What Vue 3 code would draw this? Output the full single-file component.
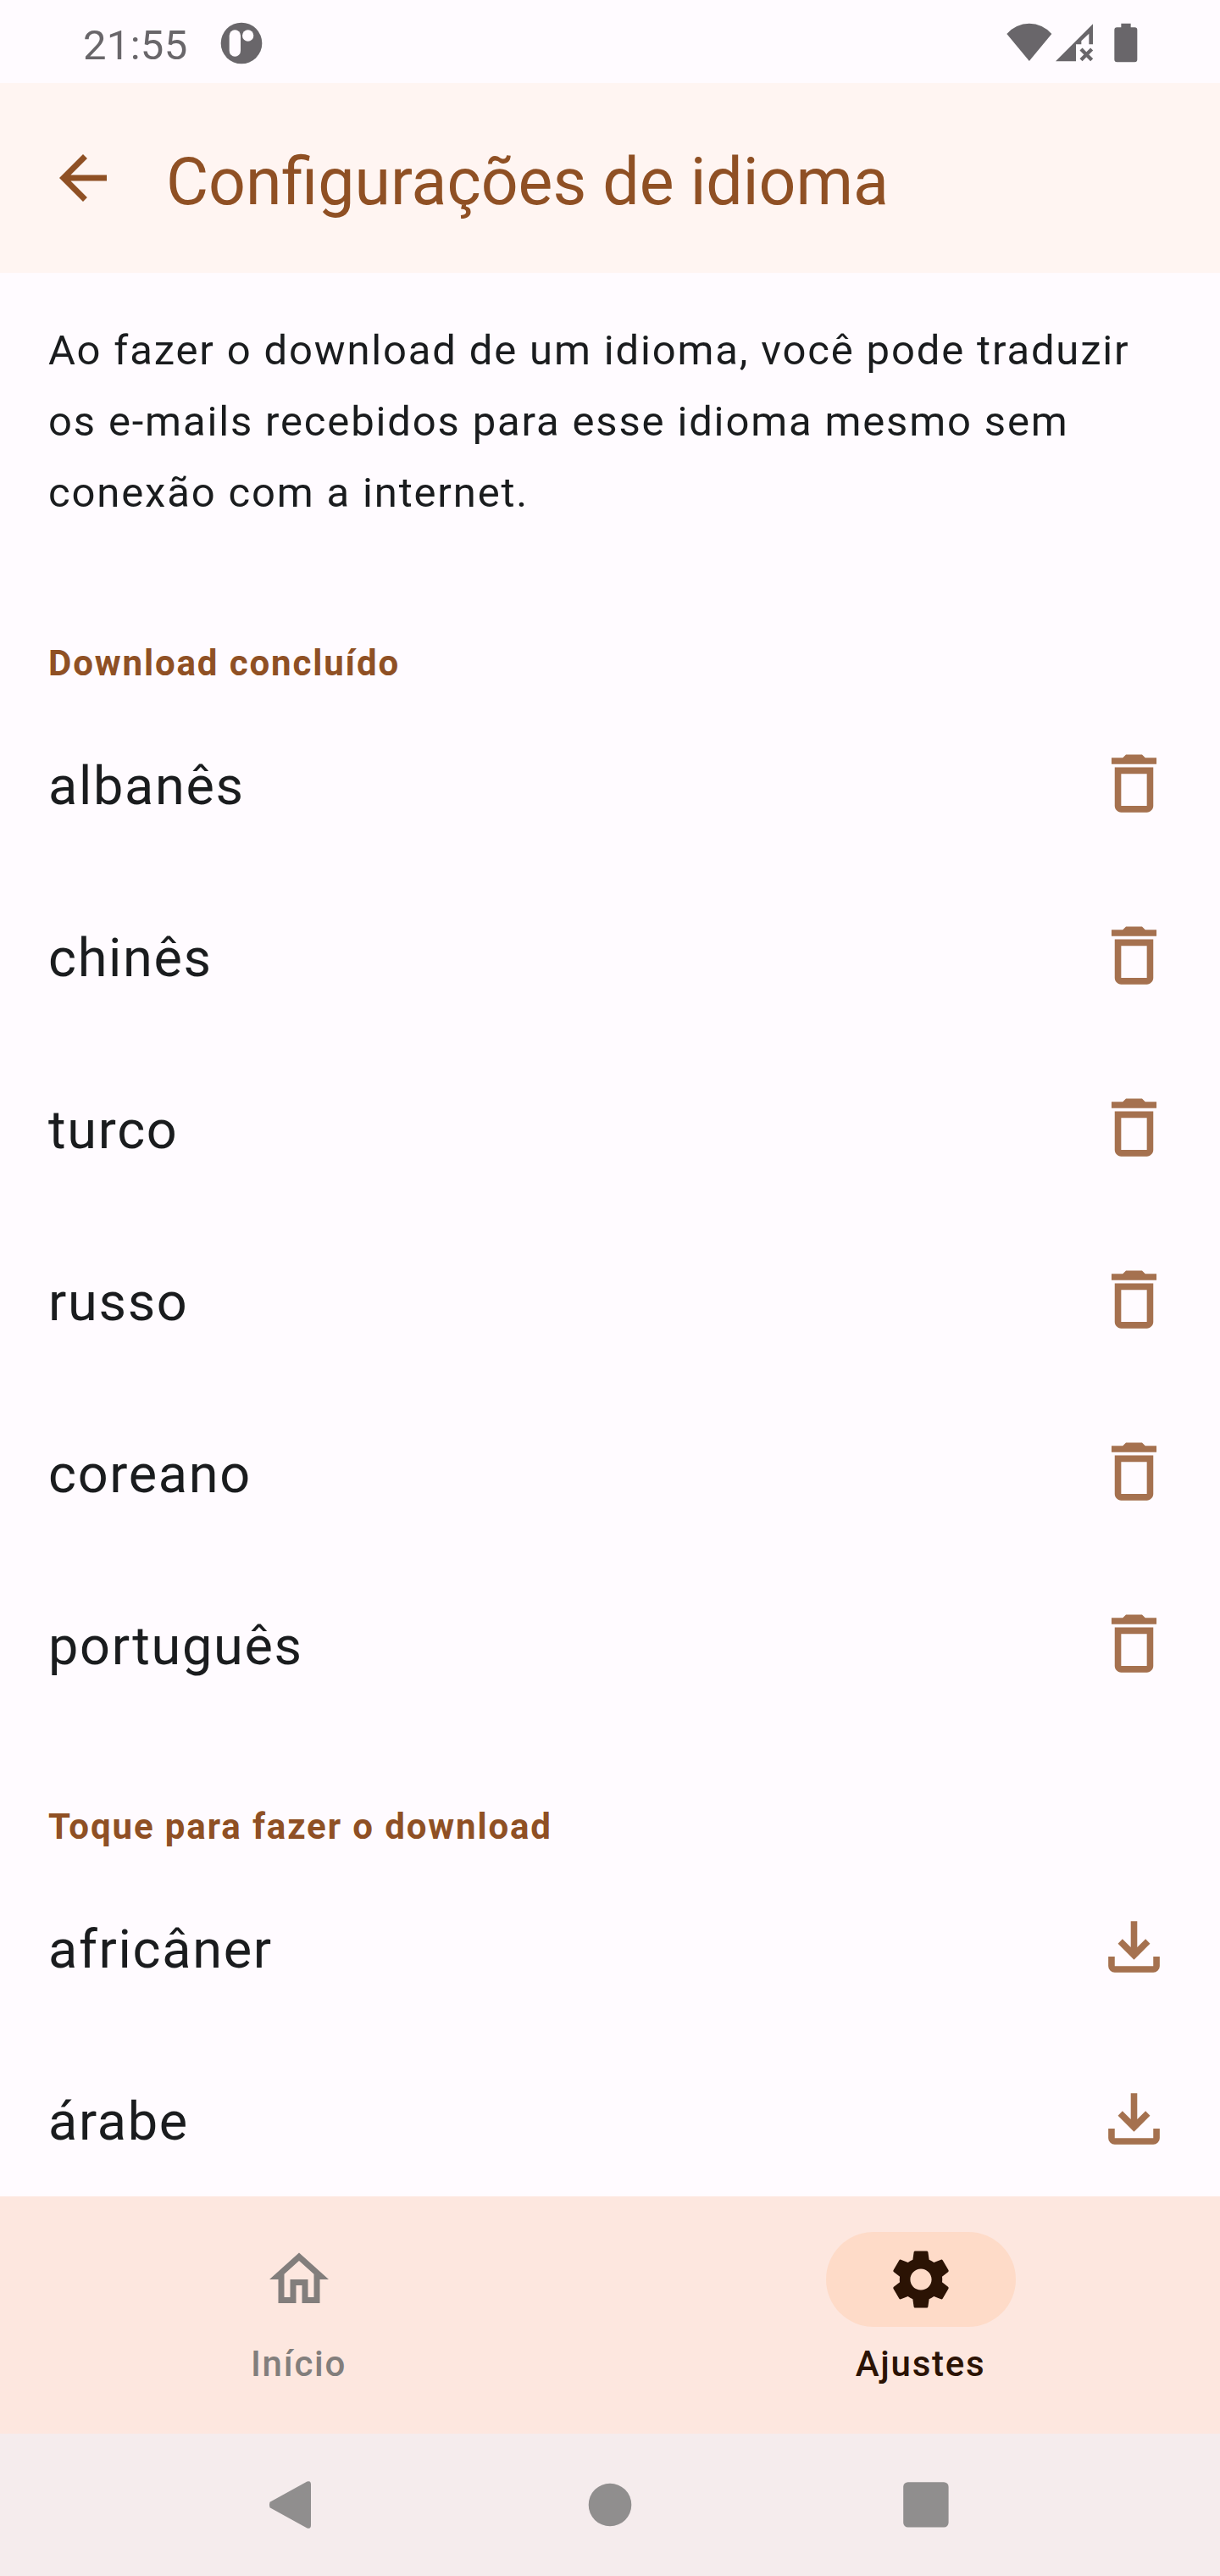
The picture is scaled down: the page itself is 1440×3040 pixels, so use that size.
<script setup>
const intro = [
  'Ao fazer o download de um idioma, você pode traduzir',
  'os e-mails recebidos para esse idioma mesmo sem',
  'conexão com a internet.',
]

const trash =
  'M6 19c0 1.1.9 2 2 2h8c1.1 0 2-.9 2-2V7H6v12zM8 9h8v10H8V9zM15.5 4l-1-1h-5l-1 1H5v2h14V4z'
const download =
  'M12 16L7 11l1.4-1.45L11 12.15V4h2v8.15l2.6-2.6L17 11zM6 20q-.825 0-1.4125-.5875T4 18v-3h2v3h12v-3h2v3q0 .825-.5875 1.4125T18 20z'

const sections = [
  {
    title: 'Download concluído',
    icon: trash,
    action: 'Excluir',
    languages: ['albanês', 'chinês', 'turco', 'russo', 'coreano', 'português'],
  },
  {
    title: 'Toque para fazer o download',
    icon: download,
    action: 'Baixar',
    languages: ['africâner', 'árabe'],
  },
]

const tabs = [
  {
    label: 'Início',
    active: false,
    icon: 'M12 5.69l5 4.5V18h-2v-6H9v6H7v-7.81l5-4.5M12 3L2 12h3v8h6v-6h2v6h6v-8h3L12 3z',
  },
  {
    label: 'Ajustes',
    active: true,
    icon: 'M19.14 12.94c.04-.3.06-.61.06-.94 0-.32-.02-.64-.07-.94l2.03-1.58c.18-.14.23-.41.12-.61l-1.92-3.32c-.12-.22-.37-.29-.59-.22l-2.39.96c-.5-.38-1.03-.7-1.62-.94l-.36-2.54c-.04-.24-.24-.41-.48-.41h-3.84c-.24 0-.43.17-.47.41l-.36 2.54c-.59.24-1.13.57-1.62.94l-2.39-.96c-.22-.08-.47 0-.59.22L2.74 8.87c-.12.21-.08.47.12.61l2.03 1.58c-.05.3-.09.63-.09.94s.02.64.07.94l-2.03 1.58c-.18.14-.23.41-.12.61l1.92 3.32c.12.22.37.29.59.22l2.39-.96c.5.38 1.03.7 1.62.94l.36 2.54c.05.24.24.41.48.41h3.84c.24 0 .44-.17.47-.41l.36-2.54c.59-.24 1.13-.56 1.62-.94l2.39.96c.22.08.47 0 .59-.22l1.92-3.32c.12-.22.07-.47-.12-.61l-2.01-1.58zM12 15.6c-1.98 0-3.6-1.62-3.6-3.6s1.62-3.6 3.6-3.6 3.6 1.62 3.6 3.6-1.62 3.6-3.6 3.6z',
  },
]
</script>

<template>
  <div class="screen">
    <div class="status">
      <div class="status-left">
        <span class="clock">21:55</span>
        <svg class="badge" viewBox="0 0 150 150">
          <circle cx="75" cy="75" r="73" />
          <rect class="hole" x="32" y="28" width="40" height="94" rx="20" />
          <circle class="hole" cx="98" cy="48" r="20" />
        </svg>
      </div>
      <svg class="status-right" viewBox="0 0 480 150">
        <path d="M4 45A105 105 0 0 1 163 45L83.500 141Z" />
        <path d="M177 142L309 10V82H295V44L268 70V82H249V142Z" />
        <path class="cross" d="M267 99L305 137M305 99L267 137" />
        <path d="M409 8h34v14h14q9 0 9 9v105q0 9-9 9h-63q-9 0-9-9V31q0-9 9-9h15z" />
      </svg>
    </div>

    <header class="app-bar">
      <svg class="back" viewBox="0 0 24 24">
        <path d="M20 11H7.830l5.590-5.590L12 4l-8 8 8 8 1.410-1.410L7.830 13H20v-2z" />
      </svg>
      <h1>Configurações de idioma</h1>
    </header>

    <main>
      <p class="intro">
        <span v-for="line in intro" :key="line">{{ line }}</span>
      </p>
      <section v-for="s in sections" :key="s.title">
        <h2>{{ s.title }}</h2>
        <ul>
          <li v-for="name in s.languages" :key="name">
            <span class="name">{{ name }}</span>
            <svg class="action" viewBox="0 0 24 24" :aria-label="s.action">
              <path fill-rule="evenodd" :d="s.icon" />
            </svg>
          </li>
        </ul>
      </section>
    </main>

    <nav class="tabs">
      <div v-for="t in tabs" :key="t.label" class="tab" :class="{ active: t.active }">
        <span class="pill">
          <svg viewBox="0 0 24 24"><path :d="t.icon" /></svg>
        </span>
        <span class="label">{{ t.label }}</span>
      </div>
    </nav>

    <div class="system">
      <svg viewBox="0 0 60 60"><path d="M6.500 26.800L50.500 2.600Q55 1 55 6V54Q55 59 50.500 57.400L6.500 33.200Q5.400 30 6.500 26.800Z" /></svg>
      <svg viewBox="0 0 60 60"><circle cx="30" cy="30" r="25.300" /></svg>
      <svg viewBox="0 0 60 60"><rect x="3.200" y="3.200" width="53.400" height="53.400" rx="5.500" /></svg>
    </div>
  </div>
</template>

<style>
body {
  margin: 0;
}
</style>

<style scoped>
.screen {
  width: 1440px;
  height: 3040px;
  display: flex;
  flex-direction: column;
  overflow: hidden;
  background: #fffbff;
  color: #1a1c1e;
  font-family: Roboto, sans-serif;
}
svg {
  display: block;
  flex: none;
  fill: currentColor;
}
.status {
  flex: none;
  height: 98px;
  box-sizing: border-box;
  display: flex;
  justify-content: space-between;
  padding: 25px 93px 0 98px;
  color: #69666a;
}
.status-left {
  display: flex;
  gap: 38px;
}
.clock {
  width: 124px;
  padding-top: 1px;
  font-size: 49px;
  line-height: 56px;
  letter-spacing: 0.3px;
  white-space: nowrap;
}
.badge {
  width: 50px;
  height: 50px;
  margin-top: 1px;
}
.hole {
  fill: #fffbff;
}
.status-right {
  width: 160px;
  height: 50px;
}
.cross {
  fill: none;
  stroke: currentColor;
  stroke-width: 13;
}
.app-bar {
  flex: none;
  height: 224px;
  display: flex;
  align-items: center;
  gap: 56px;
  padding-left: 56px;
  background: #fff5f2;
  color: #8f5024;
}
.back {
  width: 84px;
  height: 84px;
}
h1 {
  margin: 9px 0 0;
  font-size: 77px;
  font-weight: 400;
  line-height: 98px;
}
main {
  flex: 1;
  min-height: 0;
  overflow: hidden;
  padding: 50px 56px 0 57px;
}
.intro {
  margin: 0 0 115px;
  font-size: 49px;
  line-height: 84px;
  letter-spacing: 1.84px;
  white-space: nowrap;
}
.intro span {
  display: block;
}
section + section {
  margin-top: 71px;
}
h2 {
  margin: 0;
  padding-top: 2px;
  height: 82px;
  font-size: 42px;
  font-weight: 700;
  line-height: 84px;
  letter-spacing: 1.88px;
  color: #8f5024;
}
ul {
  margin: 0;
  padding: 0;
  list-style: none;
}
li {
  height: 203px;
  display: flex;
  align-items: center;
  justify-content: space-between;
}
.name {
  padding-top: 6px;
  font-size: 63px;
  letter-spacing: 1.68px;
}
.action {
  width: 91px;
  height: 91px;
  color: #a5714f;
}
.tabs {
  flex: none;
  height: 280px;
  display: flex;
  gap: 28px;
  background: #fde7df;
}
.tab {
  flex: 1;
  display: flex;
  flex-direction: column;
  align-items: center;
  padding-top: 42px;
  color: #827e7c;
}
.pill {
  width: 224px;
  height: 112px;
  display: flex;
  align-items: center;
  justify-content: center;
  border-radius: 56px;
}
.pill svg {
  width: 84px;
  height: 84px;
}
.label {
  margin-top: 16px;
  padding-right: 1px;
  font-size: 42px;
  font-weight: 500;
  line-height: 56px;
  letter-spacing: 1.75px;
}
.active {
  color: #2b1304;
}
.active .pill {
  background: #fedbc8;
}
.system {
  flex: none;
  height: 168px;
  box-sizing: border-box;
  display: flex;
  align-items: center;
  gap: 318px;
  padding-left: 312px;
  background: #f5eced;
  color: #908e8e;
}
.system svg {
  width: 60px;
  height: 60px;
}
.system svg:last-child {
  margin-left: -5px;
}
</style>
